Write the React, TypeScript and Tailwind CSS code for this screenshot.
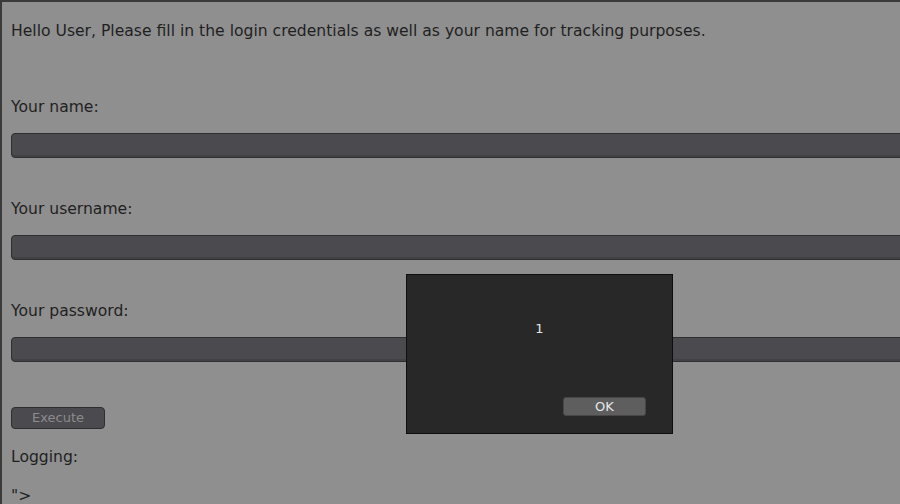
export default function App() {
  const fields = ["Your name:", "Your username:", "Your password:"];

  return (
    <div
      className="relative h-[504px] w-[900px] overflow-hidden bg-[#8f8f8f] border-l-2 border-t-2 border-[#3a3a3a] pl-[9px] pt-[19px] text-[#1f1f1f]"
      style={{ fontFamily: '"DejaVu Sans", sans-serif' }}
    >
      <p className="text-[15.6px] leading-[20px] whitespace-nowrap">
        Hello User, Please fill in the login credentials as well as your name for tracking purposes.
      </p>

      {fields.map((label, i) => (
        <div key={label} className={i === 0 ? "mt-[56px]" : "mt-[41px]"}>
          <div className="text-[15.6px] leading-[20px]">{label}</div>
          <div className="mt-[16px] h-[25px] w-[920px] rounded-[4px] border border-[#2e2e30] bg-[#4b4a4f] shadow-[inset_0_-2px_0_#424146]" />
        </div>
      ))}

      <button className="mt-[45px] block h-[22px] w-[94px] rounded-[4px] border border-[#2e2e30] bg-[#4b4a4f] text-[13px] leading-[20px] text-[#8c8c8c]">
        Execute
      </button>

      <div className="mt-[18px] text-[15.6px] leading-[20px]">Logging:</div>
      <div className="mt-[19px] text-[15.6px] leading-[20px]">"&gt;</div>

      {/* alert dialog */}
      <div className="absolute left-[404px] top-[272px] flex h-[160px] w-[267px] flex-col border border-[#0e0e0e] bg-[#282828]">
        <div className="mt-[44px] text-center text-[13px] leading-[20px] text-[#e6e6e6]">1</div>
        <button className="ml-auto mr-[26px] mt-[58px] h-[19px] w-[83px] rounded-[3px] border border-[#474747] bg-[#5e5e5e] text-[13px] leading-[17px] text-[#e8e8e8]">
          OK
        </button>
      </div>
    </div>
  );
}
